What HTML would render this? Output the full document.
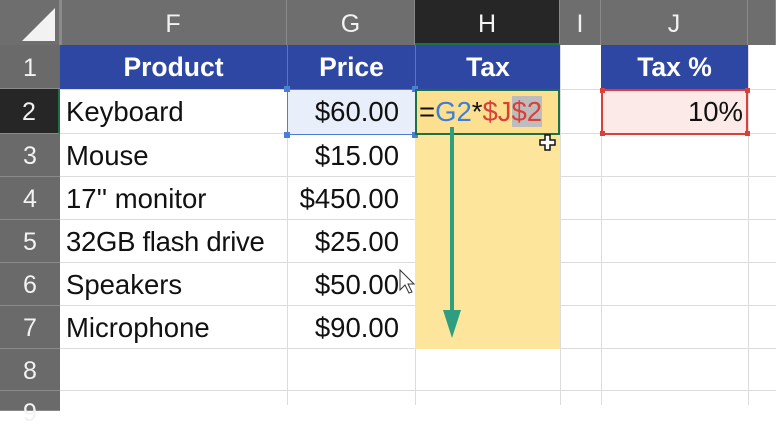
<!DOCTYPE html>
<html><head><style>
body{margin:0;width:776px;height:405px;overflow:hidden;background:#fff;font-family:"Liberation Sans",sans-serif;position:relative}
.a{position:absolute;box-sizing:border-box}
.ch{top:0;height:45px;background:#6e6e6e;color:#f2f2f2;font-size:25px;text-align:center;line-height:48px;border-right:1px solid #8a8a8a}
.rh{left:0;width:60px;background:#6a6a6a;color:#f2f2f2;font-size:25px;text-align:center;border-bottom:1px solid #8a8a8a}
.hl{left:60px;right:0;height:1px;background:#dcdcdc}
.vl{top:45px;bottom:0;width:1px;background:#dcdcdc}
.t{font-size:27.5px;color:#111;line-height:43px}
.hd{background:#2e47a3;color:#fff;font-weight:bold;font-size:26.5px;text-align:center;line-height:45px}
</style></head><body>
<div class="a ch" style="left:0;width:60px;background:#6e6e6e"></div>
<div class="a" style="left:22px;top:8px;width:0;height:0;border-left:33px solid transparent;border-bottom:33px solid #f2f2f2"></div>
<div class="a ch" style="left:60px;width:227px">F</div>
<div class="a ch" style="left:287px;width:128px">G</div>
<div class="a ch" style="left:415px;width:145px;background:#262626;border-bottom:2px solid #1e7145">H</div>
<div class="a ch" style="left:560px;width:41px">I</div>
<div class="a ch" style="left:601px;width:147px">J</div>
<div class="a ch" style="left:748px;width:28px"></div>
<div class="a" style="left:60px;top:0;width:2px;height:45px;background:#8a8a8a"></div>

<div class="a rh" style="top:45px;height:44px;line-height:46px">1</div>
<div class="a rh" style="top:89px;height:45px;line-height:46px;background:#262626;border-right:2px solid #1e7145">2</div>
<div class="a rh" style="top:134px;height:43px;line-height:44px">3</div>
<div class="a rh" style="top:177px;height:43px;line-height:44px">4</div>
<div class="a rh" style="top:220px;height:43px;line-height:44px">5</div>
<div class="a rh" style="top:263px;height:43px;line-height:44px">6</div>
<div class="a rh" style="top:306px;height:43px;line-height:44px">7</div>
<div class="a rh" style="top:349px;height:42px;line-height:44px">8</div>
<div class="a rh" style="top:391px;height:20px;line-height:44px">9</div>

<div class="a hl" style="top:133px"></div><div class="a hl" style="top:176px"></div><div class="a hl" style="top:219px"></div><div class="a hl" style="top:262px"></div><div class="a hl" style="top:305px"></div><div class="a hl" style="top:348px"></div><div class="a hl" style="top:390px"></div><div class="a hl" style="top:89px"></div>
<div class="a vl" style="left:287px"></div><div class="a vl" style="left:415px"></div><div class="a vl" style="left:560px"></div><div class="a vl" style="left:601px"></div><div class="a vl" style="left:748px"></div>

<div class="a" style="left:415px;top:134px;width:145px;height:215px;background:#fde59b"></div>

<div class="a hd" style="left:60px;top:45px;width:227px;height:44px">Product</div>
<div class="a hd" style="left:287px;top:45px;width:128px;height:44px;border-left:1px solid #5a72c8">Price</div>
<div class="a hd" style="left:415px;top:45px;width:145px;height:44px;border-left:1px solid #5a72c8">Tax</div>
<div class="a hd" style="left:601px;top:45px;width:147px;height:44px">Tax %</div>

<div class="a" style="left:287px;top:89px;width:129px;height:46px;background:#e8eefa;border:1px solid #4a7fd4"></div>
<div class="a" style="left:284px;top:86px;width:6px;height:6px;background:#4a7fd4"></div>
<div class="a" style="left:284px;top:132px;width:6px;height:6px;background:#4a7fd4"></div>
<div class="a" style="left:412px;top:86px;width:6px;height:6px;background:#4a7fd4"></div>
<div class="a" style="left:412px;top:132px;width:6px;height:6px;background:#4a7fd4"></div>
<div class="a" style="left:415px;top:89px;width:145px;height:46px;background:#fde08f;border:2px solid #1e7145"></div>
<div class="a" style="left:601px;top:89px;width:147px;height:46px;background:#fbeae8;border:2px solid #d9403b"></div>
<div class="a" style="left:600px;top:88px;width:5px;height:5px;background:#d9403b"></div><div class="a" style="left:745px;top:88px;width:5px;height:5px;background:#d9403b"></div>
<div class="a" style="left:600px;top:131px;width:5px;height:5px;background:#d9403b"></div><div class="a" style="left:745px;top:131px;width:5px;height:5px;background:#d9403b"></div>

<div class="a t" style="left:66px;top:90px">Keyboard</div>
<div class="a t" style="left:66px;top:134px">Mouse</div>
<div class="a t" style="left:66px;top:177px">17'' monitor</div>
<div class="a t" style="left:66px;top:220px;letter-spacing:-0.3px">32GB flash drive</div>
<div class="a t" style="left:66px;top:263px">Speakers</div>
<div class="a t" style="left:66px;top:306px">Microphone</div>
<div class="a t" style="right:377px;top:90px">$60.00</div>
<div class="a t" style="right:377px;top:134px">$15.00</div>
<div class="a t" style="right:377px;top:177px">$450.00</div>
<div class="a t" style="right:377px;top:220px">$25.00</div>
<div class="a t" style="right:377px;top:263px">$50.00</div>
<div class="a t" style="right:377px;top:306px">$90.00</div>
<div class="a t" style="right:33px;top:90px">10%</div>
<div class="a t" style="left:419px;top:90px"><span>=</span><span style="color:#3d7fd6">G2</span>*<span style="color:#d9403b">$J<span style="background:#bdbdbd">$2</span></span></div>

<svg class="a" style="left:0;top:0" width="776" height="405">
<line x1="452" y1="127" x2="452" y2="320" stroke="#2e9e80" stroke-width="4"/>
<polygon points="443,310 461,310 452,338" fill="#2e9e80"/>
<path d="M540 140h5v-5h5v5h5v5h-5v5h-5v-5h-5z" fill="#fff" stroke="#111" stroke-width="1.5"/>
<path d="M400 270v20l5-5 4 8 3-1-4-8h6z" fill="#fff" stroke="#333" stroke-width="1"/>
</svg>
</body></html>
